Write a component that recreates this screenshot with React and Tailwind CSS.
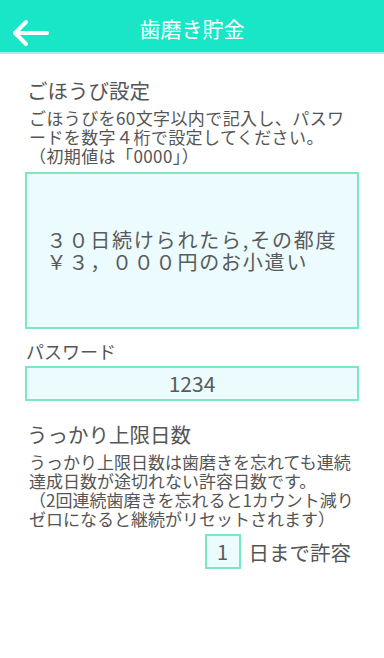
export default function App() {
  return (
    <div
      className="w-[384px] h-[658px] bg-white text-[#555555] overflow-hidden"
      style={{ fontFamily: '"Noto Sans CJK JP", "Noto Sans", sans-serif' }}
    >
      {/* Header */}
      <div className="relative h-[54px] bg-[#19e6c7] border-b-2 border-[#9ff2e4] flex items-center justify-center">
        <svg
          className="absolute left-[11px] top-[15px]"
          width="40"
          height="36"
          viewBox="0 0 40 36"
          fill="none"
          stroke="white"
          strokeWidth="4"
          strokeLinecap="round"
          strokeLinejoin="round"
        >
          <path d="M4 18 H36" />
          <path d="M15 7 L4 18 L15 29" />
        </svg>
        <h1 className="text-white text-[21px] leading-[26px] mt-[4px]">歯磨き貯金</h1>
      </div>

      <div className="px-[25px]">
        {/* Reward */}
        <h2 className="mt-[23px] ml-[2px] text-[20.5px] leading-[26px]">ごほうび設定</h2>
        <p className="mt-[5px] ml-[4px] text-[17px] leading-[19px] tracking-[0.4px] whitespace-nowrap">
          ごほうびを60文字以内で記入し、パスワ
          <br />
          ードを数字４桁で設定してください。
          <br />
          （初期値は「0000」）
        </p>
        <div className="mt-[7px] h-[157px] border-2 border-[#7ae9c3] bg-[#ebfbfe] flex items-center justify-center text-[20px] leading-[22px] tracking-[1.8px] text-[#5a5a5a]">
          <div className="whitespace-nowrap">
            ３０日続けられたら,その都度
            <br />
            ￥３，０００円のお小遣い
          </div>
        </div>

        {/* Password */}
        <div className="mt-[10px] ml-[1px] text-[18px] leading-[24px]">パスワード</div>
        <div className="mt-[3px] h-[35px] border-2 border-[#7ae9c3] bg-[#ebfbfe] flex items-center justify-center text-[21px] text-[#5a5a5a]">
          1234
        </div>

        {/* Forgot limit */}
        <h2 className="mt-[20px] ml-[2px] text-[20.5px] leading-[26px]">うっかり上限日数</h2>
        <p className="mt-[5px] ml-[4px] text-[17px] leading-[19px] whitespace-nowrap">
          うっかり上限日数は歯磨きを忘れても連続
          <br />
          達成日数が途切れない許容日数です。
          <br />
          （2回連続歯磨きを忘れると1カウント減り
          <br />
          ゼロになると継続がリセットされます）
        </p>
        <div className="mt-[6px] flex items-center justify-end pr-[8px]">
          <div className="w-[36px] h-[35px] border-2 border-[#7ae9c3] bg-[#ebfbfe] flex items-center justify-center text-[20px] text-[#5a5a5a]">
            1
          </div>
          <span className="ml-[8px] text-[20.5px] leading-[26px]">日まで許容</span>
        </div>
      </div>
    </div>
  );
}
